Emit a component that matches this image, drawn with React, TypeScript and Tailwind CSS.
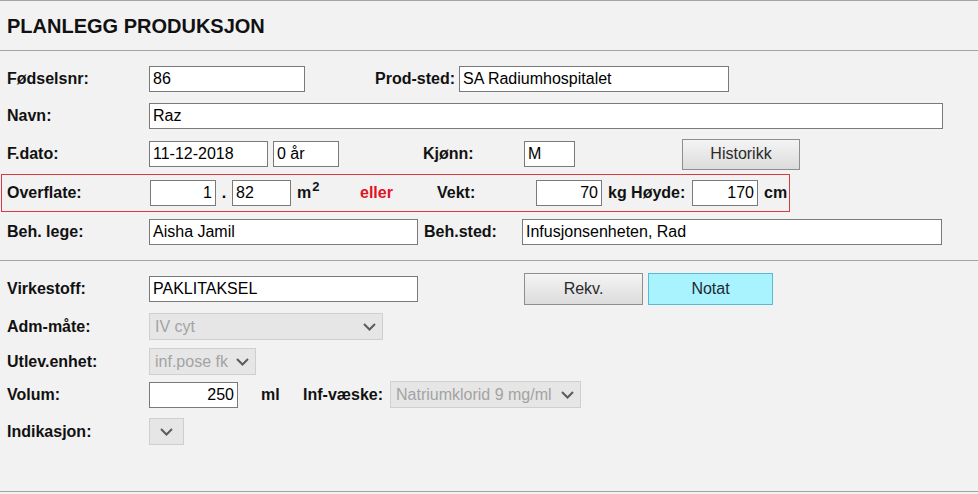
const font = { fontFamily: '"Liberation Sans", Arial, sans-serif' };

function Label({ children, className = "" }: { children: React.ReactNode; className?: string }) {
  return <span className={`text-[16px] font-bold text-[#111] whitespace-nowrap ${className}`}>{children}</span>;
}

function Field({ value, className = "", right = false }: { value: string; className?: string; right?: boolean }) {
  return (
    <div
      className={`h-[26px] shrink-0 border border-[#7a7a7a] bg-white px-[3px] text-[16px] leading-[24px] text-black whitespace-nowrap overflow-hidden ${
        right ? "text-right" : ""
      } ${className}`}
    >
      {value}
    </div>
  );
}

function Chevron() {
  return (
    <svg width="13" height="8" viewBox="0 0 13 8" className="shrink-0">
      <polyline points="1,1 6.5,6.5 12,1" fill="none" stroke="#5c5c5c" strokeWidth="2" />
    </svg>
  );
}

function Select({ value, className = "" }: { value: string; className?: string }) {
  return (
    <div
      className={`flex h-[27px] shrink-0 items-center justify-between border border-[#cfcfcf] bg-[#e6e6e6] pl-[5px] pr-[6px] text-[16px] text-[#a3a3a3] whitespace-nowrap overflow-hidden ${className}`}
    >
      <span>{value}</span>
      <Chevron />
    </div>
  );
}

function Button({ children, className = "", cyan = false }: { children: React.ReactNode; className?: string; cyan?: boolean }) {
  return (
    <div
      className={`flex shrink-0 items-center justify-center border text-[16px] ${
        cyan
          ? "border-[#5bb7d6] bg-[#a8f3fe] text-[#1c2a33]"
          : "border-[#8e8e8e] bg-gradient-to-b from-[#f4f4f4] to-[#dcdcdc] text-[#2a2a2a]"
      } ${className}`}
    >
      {children}
    </div>
  );
}

export default function App() {
  return (
    <div style={font} className="h-[494px] w-[978px] overflow-hidden border-t border-[#a3a3a3] bg-[#f2f2f2]">
      {/* Title */}
      <div className="flex h-[50px] items-center border-b border-[#a3a3a3] pl-[7px]">
        <h1 className="text-[20px] font-bold text-[#111]">PLANLEGG PRODUKSJON</h1>
      </div>

      {/* Patient */}
      <div className="border-b border-[#a3a3a3] pb-[15px] pt-[15px]">
        <div className="flex h-[26px] items-center pl-[7px]">
          <Label className="w-[142px]">Fødselsnr:</Label>
          <Field value="86" className="w-[156px]" />
          <Label className="ml-[70px] w-[84px]">Prod-sted:</Label>
          <Field value="SA Radiumhospitalet" className="w-[270px]" />
        </div>

        <div className="mt-[11px] flex h-[26px] items-center pl-[7px]">
          <Label className="w-[142px]">Navn:</Label>
          <Field value="Raz" className="w-[794px]" />
        </div>

        <div className="mt-[12px] flex h-[26px] items-center pl-[7px]">
          <Label className="w-[142px]">F.dato:</Label>
          <Field value="11-12-2018" className="w-[119px]" />
          <Field value="0 år" className="ml-[5px] w-[66px]" />
          <Label className="ml-[84px] w-[101px]">Kjønn:</Label>
          <Field value="M" className="w-[51px]" />
          <Button className="ml-[107px] h-[31px] w-[118px]">Historikk</Button>
        </div>

        <div className="ml-[1px] mt-[7px] flex h-[38px] w-[789px] items-center border border-[#d83a42] pl-[5px]">
          <Label className="w-[143px]">Overflate:</Label>
          <Field value="1" right className="w-[66px]" />
          <span className="w-[16px] text-center text-[16px] font-bold">.</span>
          <Field value="82" className="w-[59px]" />
          <Label className="ml-[6px] flex w-[63px] items-start">
            m<span className="-mt-[1px] ml-[1px] text-[13px] leading-none">2</span>
          </Label>
          <Label className="w-[77px] text-[#e0141e]">eller</Label>
          <Label className="w-[99px]">Vekt:</Label>
          <Field value="70" right className="w-[66px]" />
          <Label className="ml-[6px] w-[84px]">kg Høyde:</Label>
          <Field value="170" right className="w-[66px]" />
          <Label className="ml-[6px]">cm</Label>
        </div>

        <div className="mt-[7px] flex h-[26px] items-center pl-[7px]">
          <Label className="w-[142px]">Beh. lege:</Label>
          <Field value="Aisha Jamil" className="w-[269px]" />
          <Label className="ml-[6px] w-[98px]">Beh.sted:</Label>
          <Field value="Infusjonsenheten, Rad" className="w-[420px]" />
        </div>
      </div>

      {/* Medication */}
      <div className="h-[231px] border-b border-[#a3a3a3] pt-[12px]">
        <div className="flex h-[32px] items-center pl-[7px]">
          <Label className="w-[142px]">Virkestoff:</Label>
          <Field value="PAKLITAKSEL" className="w-[269px]" />
          <Button className="ml-[106px] h-[32px] w-[119px]">Rekv.</Button>
          <Button cyan className="ml-[5px] h-[32px] w-[125px]">Notat</Button>
        </div>

        <div className="mt-[8px] flex h-[27px] items-center pl-[7px]">
          <Label className="w-[142px]">Adm-måte:</Label>
          <Select value="IV cyt" className="w-[234px]" />
        </div>

        <div className="mt-[8px] flex h-[27px] items-center pl-[7px]">
          <Label className="w-[142px]">Utlev.enhet:</Label>
          <Select value="inf.pose fk" className="w-[107px]" />
        </div>

        <div className="mt-[6px] flex h-[27px] items-center pl-[7px]">
          <Label className="w-[142px]">Volum:</Label>
          <Field value="250" right className="w-[89px]" />
          <Label className="ml-[23px] w-[42px]">ml</Label>
          <Label className="w-[87px]">Inf-væske:</Label>
          <Select value="Natriumklorid 9 mg/ml" className="w-[191px]" />
        </div>

        <div className="mt-[10px] flex h-[27px] items-center pl-[7px]">
          <Label className="w-[142px]">Indikasjon:</Label>
          <Select value="" className="w-[35px] justify-center pl-[6px]" />
        </div>
      </div>
    </div>
  );
}
